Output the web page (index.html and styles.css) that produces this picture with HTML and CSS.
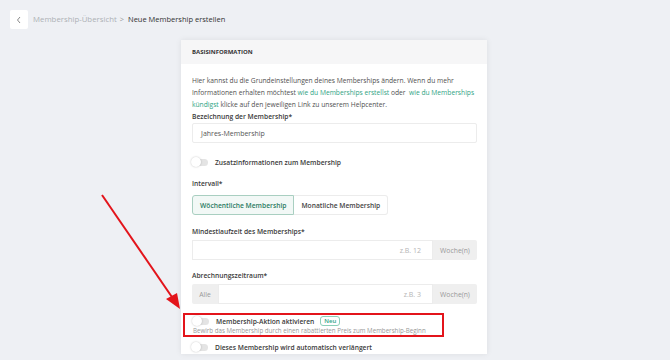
FILE: index.html
```html
<!DOCTYPE html>
<html lang="de">
<head>
    <meta charset="utf-8">
    <title>Neue Membership erstellen</title>
    <link rel="stylesheet" href="styles.css">
</head>
<body>
    <div class="topbar">
        <button class="back" type="button">
            <svg width="6" height="8" viewBox="0 0 6 8"><path d="M4 1 L1.5 4 L4 7" fill="none" stroke="#888" stroke-width="1"/></svg>
        </button>
        <span class="crumb">Membership-Übersicht</span>
        <span class="sep">&gt;</span>
        <span class="crumb current">Neue Membership erstellen</span>
    </div>

    <div class="card">
        <div class="card-header">BASISINFORMATION</div>
        <div class="card-body">
            <p class="intro">Hier kannst du die Grundeinstellungen deines Memberships ändern. Wenn du mehr Informationen erhalten möchtest <a href="#">wie du Memberships erstellst</a> oder &nbsp;<a href="#">wie du Memberships kündigst</a> klicke auf den jeweiligen Link zu unserem Helpcenter.</p>

            <label class="field-label">Bezeichnung der Membership*</label>
            <div class="input">Jahres-Membership</div>

            <div class="toggle-row extra">
                <span class="toggle"></span>
                <span class="toggle-label">Zusatzinformationen zum Membership</span>
            </div>

            <label class="field-label">Intervall*</label>
            <div class="segmented">
                <span class="seg active">Wöchentliche Membership</span>
                <span class="seg">Monatliche Membership</span>
            </div>

            <label class="field-label">Mindestlaufzeit des Memberships*</label>
            <div class="input-group">
                <span class="input placeholder">z.B. 12</span>
                <span class="addon">Woche(n)</span>
            </div>

            <label class="field-label spaced">Abrechnungszeitraum*</label>
            <div class="input-group">
                <span class="addon addon-left">Alle</span>
                <span class="input placeholder">z.B. 3</span>
                <span class="addon">Woche(n)</span>
            </div>

            <div class="highlight">
                <div class="toggle-row">
                    <span class="toggle"></span>
                    <span class="toggle-label">Membership-Aktion aktivieren</span>
                    <span class="badge">Neu</span>
                </div>
                <div class="hint">Bewirb das Membership durch einen rabattierten Preis zum Membership-Beginn</div>
            </div>

            <div class="toggle-row last">
                <span class="toggle"></span>
                <span class="toggle-label">Dieses Membership wird automatisch verlängert</span>
            </div>
        </div>
    </div>

    <svg class="arrow" width="120" height="140" viewBox="0 0 120 140">
        <line x1="22" y1="15" x2="94" y2="120" stroke="#e3141b" stroke-width="2"/>
        <path d="M100 129 L86 119 L97 113 Z" fill="#e3141b"/>
    </svg>
</body>
</html>
```

FILE: styles.css
```css
* {
    margin: 0;
    padding: 0;
    box-sizing: border-box;
}

body {
    font-family: 'Open Sans', 'Noto Sans', sans-serif;
    font-size: 6.7px;
    color: #3b3b3b;
    background: #eef0f4;
    width: 670px;
    height: 360px;
    overflow: hidden;
    position: relative;
}

.topbar {
    display: flex;
    align-items: center;
    height: 38px;
    padding: 0 10px;
}

.back {
    width: 18px;
    height: 19px;
    background: white;
    border: none;
    border-radius: 2px;
    display: flex;
    align-items: center;
    justify-content: center;
    margin-right: 5px;
    margin-top: 1px;
}

.crumb {
    font-size: 7.8px;
    color: #adb0b5;
}

.crumb.current {
    font-size: 7.5px;
    color: #333;
}

.sep {
    font-size: 7.5px;
    color: #999;
    margin: 0 4px 0 3px;
}

.card {
    width: 306px;
    margin: 2px 0 0 181px;
    background: white;
    box-shadow: 0 0 6px rgba(0, 0, 0, 0.08);
}

.card-header {
    height: 24px;
    background: #f6f6f7;
    padding: 0 11px;
    font-size: 6px;
    font-weight: 700;
    color: #333;
    line-height: 24px;
}

.card-body {
    padding: 11px 10px 0 11px;
}

.intro {
    line-height: 12px;
    color: #505050;
}

.intro a {
    color: #2fa383;
    text-decoration: none;
}

.field-label {
    display: block;
    font-weight: 600;
    color: #3a3a3a;
    line-height: 12px;
}

.field-label.spaced {
    margin-top: 10px;
}

.input {
    display: flex;
    align-items: center;
    height: 20px;
    border: 1px solid #ececec;
    border-radius: 2px;
    padding: 0 8px;
    color: #555;
    font-size: 7px;
}

.placeholder {
    flex: 1;
    justify-content: flex-end;
    padding-right: 11px;
    color: #b5b5b5;
    border-radius: 0;
}

.input-group {
    display: flex;
    height: 20px;
    margin-top: 2px;
}

.addon {
    display: flex;
    align-items: center;
    width: 44px;
    justify-content: center;
    background: #efefef;
    color: #999;
    font-size: 6.8px;
    border-radius: 0 2px 2px 0;
}

.addon-left {
    width: 26px;
    border-radius: 2px 0 0 2px;
}

.toggle-row {
    display: flex;
    align-items: center;
    height: 12px;
}

.toggle-row.extra {
    height: 14px;
    margin-top: 12px;
    margin-bottom: 9px;
}

.toggle {
    position: relative;
    width: 16px;
    height: 7px;
    border-radius: 4px;
    background: #e4e4e4;
    margin-right: 7px;
}

.toggle::before {
    content: "";
    position: absolute;
    left: -1px;
    top: -1.5px;
    width: 10px;
    height: 10px;
    border-radius: 50%;
    background: white;
    box-shadow: 0 0 2px rgba(0, 0, 0, 0.25);
}

.toggle-label {
    font-weight: 600;
    color: #3a3a3a;
}

.segmented {
    display: flex;
    margin-top: 5px;
    margin-bottom: 11px;
}

.seg {
    display: flex;
    align-items: center;
    height: 20px;
    padding: 0 7px;
    border: 1px solid #ececec;
    font-weight: 600;
    color: #444;
}

.seg.active {
    border-color: #a9cfc1;
    background: #f2f8f6;
    color: #2b7a62;
    border-radius: 3px 0 0 3px;
}

.seg + .seg {
    border-left: none;
    border-radius: 0 3px 3px 0;
}

.highlight {
    margin: 9px 33px 0 -9px;
    padding: 0 0 0 8px;
    border: 2px solid #e3141b;
}

.badge {
    margin-left: 6px;
    border: 1px solid #8ccfb8;
    border-radius: 3px;
    color: #2fa383;
    font-size: 6px;
    font-weight: 600;
    padding: 0 3px;
    line-height: 8px;
}

.hint {
    color: #999;
    font-size: 6.2px;
    line-height: 8px;
}

.toggle-row.last {
    height: 14px;
    margin-top: 3px;
}

.arrow {
    position: absolute;
    left: 80px;
    top: 180px;
}
```
